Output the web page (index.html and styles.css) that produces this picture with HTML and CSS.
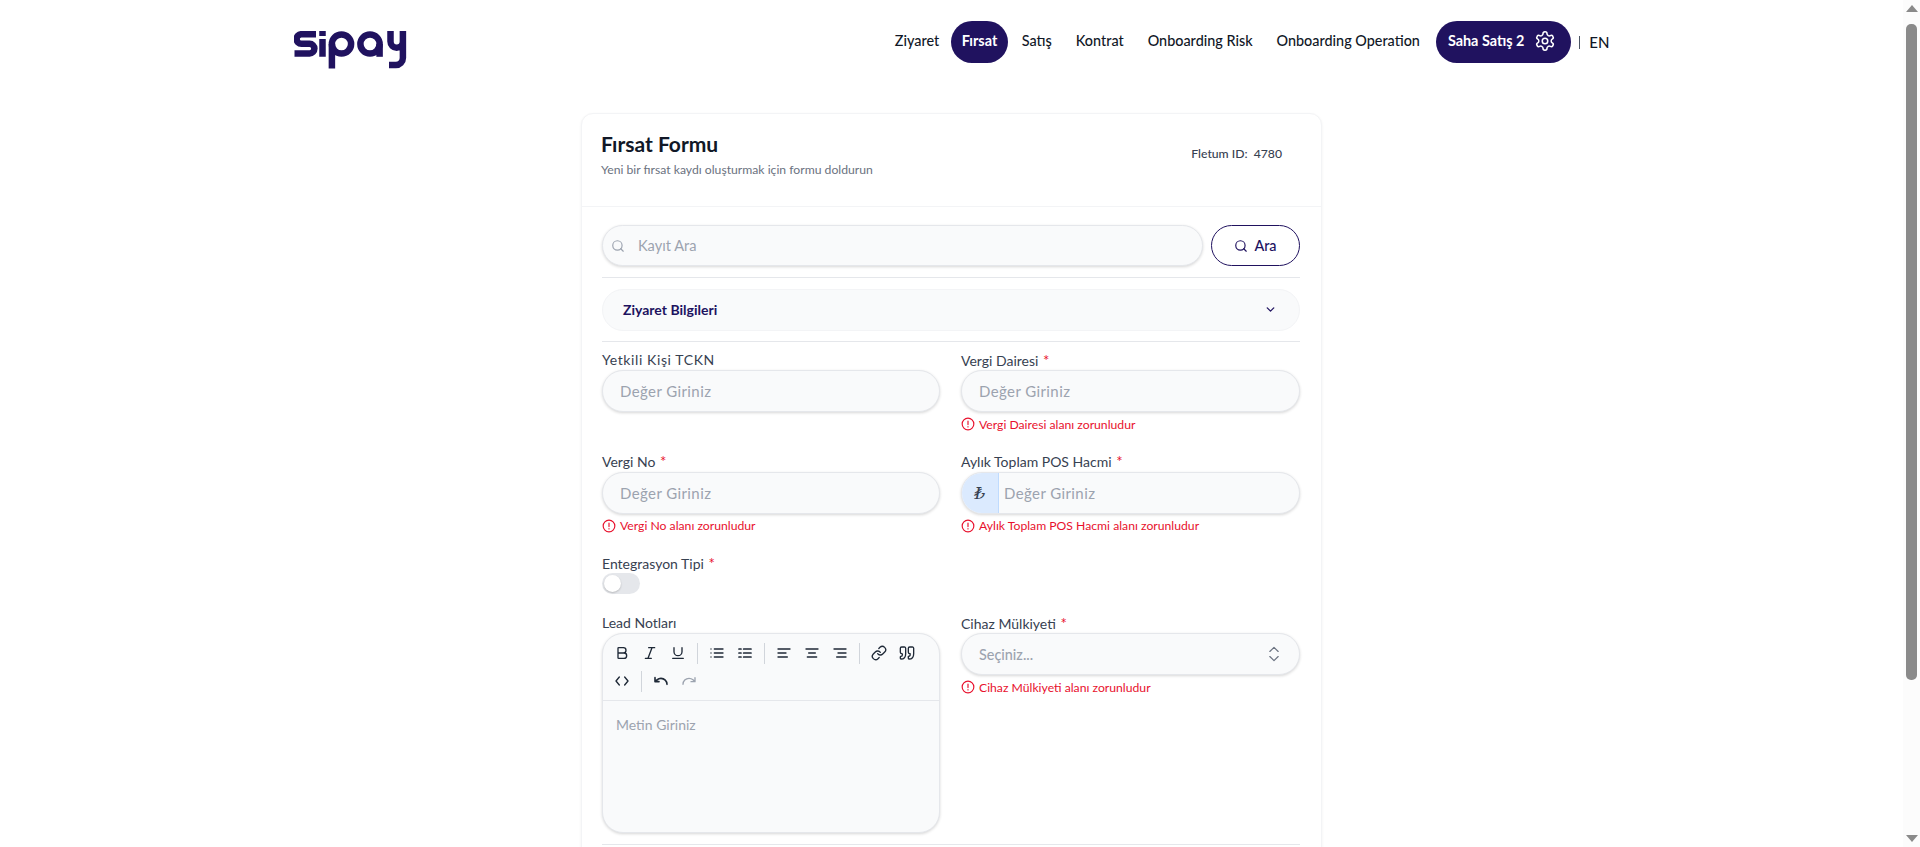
FILE: index.html
```html
<!DOCTYPE html>
<html lang="tr">

<head>
    <meta charset="UTF-8">
    <meta name="viewport" content="width=device-width, initial-scale=1.0">
    <title>Fırsat Formu</title>
    <link rel="stylesheet" href="styles.css">
</head>

<body>
    <div class="page">
        <header class="topbar">
            <svg class="logo" viewBox="0 0 113 38" fill="none" stroke="#20125f" stroke-width="6.5">
                <path d="M22 3.2H7.4a4.8 4.8 0 0 0 0 9.6H15.6a4.8 4.8 0 0 1 0 9.6H0.5" />
                <path d="M28.5 0V5M28.5 8V25.8" />
                <circle cx="47.5" cy="13" r="9.6" />
                <path d="M37.9 13V37.5" />
                <circle cx="76" cy="13" r="9.6" />
                <path d="M85.6 13V25.8" />
                <path d="M96.5 0V10.5a6.2 6.2 0 0 0 12.4 0M108.9 0V27a7 7 0 0 1 -7 7H95" />
            </svg>
            <nav class="nav">
                <a class="nav-link">Ziyaret</a>
                <a class="nav-link active">Fırsat</a>
                <a class="nav-link">Satış</a>
                <a class="nav-link">Kontrat</a>
                <a class="nav-link">Onboarding Risk</a>
                <a class="nav-link">Onboarding Operation</a>
                <a class="user-pill">Saha Satış 2
                    <svg width="22" height="22" viewBox="0 0 24 24" fill="none" stroke="#fff" stroke-width="1.7" stroke-linecap="round" stroke-linejoin="round">
                        <path d="M12.2 2h-.4a2 2 0 0 0-2 2v.2a2 2 0 0 1-1 1.7l-.4.3a2 2 0 0 1-2 0l-.2-.1a2 2 0 0 0-2.7.7l-.2.4a2 2 0 0 0 .7 2.7l.2.1a2 2 0 0 1 1 1.7v.5a2 2 0 0 1-1 1.8l-.2.1a2 2 0 0 0-.7 2.7l.2.4a2 2 0 0 0 2.7.7l.2-.1a2 2 0 0 1 2 0l.4.3a2 2 0 0 1 1 1.7v.2a2 2 0 0 0 2 2h.4a2 2 0 0 0 2-2v-.2a2 2 0 0 1 1-1.7l.4-.3a2 2 0 0 1 2 0l.2.1a2 2 0 0 0 2.7-.7l.2-.4a2 2 0 0 0-.7-2.7l-.2-.1a2 2 0 0 1-1-1.8v-.5a2 2 0 0 1 1-1.7l.2-.1a2 2 0 0 0 .7-2.7l-.2-.4a2 2 0 0 0-2.7-.7l-.2.1a2 2 0 0 1-2 0l-.4-.3a2 2 0 0 1-1-1.7V4a2 2 0 0 0-2-2z" />
                        <circle cx="12" cy="12" r="3" />
                    </svg>
                </a>
                <span class="lang-sep"></span>
                <a class="lang">EN</a>
            </nav>
        </header>

        <main class="card">
            <div class="card-head">
                <div>
                    <h1>Fırsat Formu</h1>
                    <p>Yeni bir fırsat kaydı oluşturmak için formu doldurun</p>
                </div>
                <div class="fletum">Fletum ID:&nbsp; 4780</div>
            </div>

            <div class="card-body">
                <div class="search-row">
                    <div class="search-box">
                        <svg width="14" height="14" viewBox="0 0 24 24" fill="none" stroke="#9ca3af" stroke-width="2" stroke-linecap="round">
                            <circle cx="11" cy="11" r="8" />
                            <path d="M21 21l-4.3-4.3" />
                        </svg>
                        <input type="text" placeholder="Kayıt Ara">
                    </div>
                    <button class="search-btn">
                        <svg width="14" height="14" viewBox="0 0 24 24" fill="none" stroke="#20125f" stroke-width="2" stroke-linecap="round">
                            <circle cx="11" cy="11" r="8" />
                            <path d="M21 21l-4.3-4.3" />
                        </svg>
                        Ara
                    </button>
                </div>

                <hr class="rule rule-search">

                <div class="accordion">
                    <span>Ziyaret Bilgileri</span>
                    <svg width="13" height="13" viewBox="0 0 24 24" fill="none" stroke="#20125f" stroke-width="2.4" stroke-linecap="round" stroke-linejoin="round">
                        <path d="M6 9l6 6 6-6" />
                    </svg>
                </div>

                <hr class="rule rule-accordion">

                <div class="form-grid">
                    <div class="field">
                        <label class="label-wide">Yetkili Kişi TCKN</label>
                        <input class="control" type="text" placeholder="Değer Giriniz">
                    </div>
                    <div class="field">
                        <label>Vergi Dairesi <i>*</i></label>
                        <input class="control" type="text" placeholder="Değer Giriniz">
                        <div class="error">
                            <svg width="14" height="14" viewBox="0 0 24 24" fill="none" stroke="currentColor" stroke-width="2" stroke-linecap="round"><circle cx="12" cy="12" r="10" /><path d="M12 7v6M12 16.5v.5" /></svg>
                            Vergi Dairesi alanı zorunludur
                        </div>
                    </div>
                    <div class="field field-low">
                        <label>Vergi No <i>*</i></label>
                        <input class="control" type="text" placeholder="Değer Giriniz">
                        <div class="error">
                            <svg width="14" height="14" viewBox="0 0 24 24" fill="none" stroke="currentColor" stroke-width="2" stroke-linecap="round"><circle cx="12" cy="12" r="10" /><path d="M12 7v6M12 16.5v.5" /></svg>
                            Vergi No alanı zorunludur
                        </div>
                    </div>
                    <div class="field field-low">
                        <label>Aylık Toplam POS Hacmi <i>*</i></label>
                        <div class="money">
                            <span class="money-sign">₺</span>
                            <input type="text" placeholder="Değer Giriniz">
                        </div>
                        <div class="error">
                            <svg width="14" height="14" viewBox="0 0 24 24" fill="none" stroke="currentColor" stroke-width="2" stroke-linecap="round"><circle cx="12" cy="12" r="10" /><path d="M12 7v6M12 16.5v.5" /></svg>
                            Aylık Toplam POS Hacmi alanı zorunludur
                        </div>
                    </div>
                    <div class="field field-wide">
                        <label>Entegrasyon Tipi <i>*</i></label>
                        <span class="toggle"><span class="knob"></span></span>
                    </div>
                    <div class="field">
                        <label>Lead Notları</label>
                        <div class="editor">
                            <div class="toolbar">
                                <button class="tool"><svg viewBox="0 0 24 24"><path d="M6 12h9a4 4 0 0 1 0 8H7a1 1 0 0 1-1-1V5a1 1 0 0 1 1-1h7a4 4 0 0 1 0 8" /></svg></button>
                                <button class="tool"><svg viewBox="0 0 24 24"><path d="M19 4h-9M14 20H5M15 4L9 20" /></svg></button>
                                <button class="tool"><svg viewBox="0 0 24 24"><path d="M6 4v6a6 6 0 0 0 12 0V4M4 20h16" /></svg></button>
                                <span class="tool-sep"></span>
                                <button class="tool"><svg viewBox="0 0 24 24"><path d="M3 6h.01M3 12h.01M3 18h.01M8 6h13M8 12h13M8 18h13" /></svg></button>
                                <button class="tool"><svg viewBox="0 0 24 24"><path d="M10 6h11M10 12h11M10 18h11M3 6h3M3 12h3M3 18h3" stroke-width="2.6" /></svg></button>
                                <span class="tool-sep"></span>
                                <button class="tool"><svg viewBox="0 0 24 24"><path d="M21 6H3M15 12H3M17 18H3" /></svg></button>
                                <button class="tool"><svg viewBox="0 0 24 24"><path d="M21 6H3M17 12H7M19 18H5" /></svg></button>
                                <button class="tool"><svg viewBox="0 0 24 24"><path d="M21 6H3M21 12H9M21 18H7" /></svg></button>
                                <span class="tool-sep"></span>
                                <button class="tool"><svg viewBox="0 0 24 24"><path d="M10 13a5 5 0 0 0 7.54.54l3-3a5 5 0 0 0-7.07-7.07l-1.72 1.71M14 11a5 5 0 0 0-7.54-.54l-3 3a5 5 0 0 0 7.07 7.07l1.71-1.71" /></svg></button>
                                <button class="tool"><svg viewBox="0 0 24 24"><path d="M3 21c3 0 7-1 7-8V5c0-1.25-.756-2.017-2-2H4c-1.25 0-2 .75-2 1.972V11c0 1.25.75 2 2 2 1 0 1 0 1 1v1c0 1-1 2-2 2s-1 .008-1 1.031V20c0 1 0 1 1 1z" /><path d="M15 21c3 0 7-1 7-8V5c0-1.25-.757-2.017-2-2h-4c-1.25 0-2 .75-2 1.972V11c0 1.25.75 2 2 2h.75c0 2.25.25 4-2.75 4v3c0 1 0 1 1 1z" /></svg></button>
                                <button class="tool"><svg viewBox="0 0 24 24"><path d="M16 18l5-6-5-6M8 6l-5 6 5 6" /></svg></button>
                                <span class="tool-sep"></span>
                                <button class="tool"><svg viewBox="0 0 24 24"><path d="M3 7v6h6M21 17a9 9 0 0 0-9-9 9 9 0 0 0-6 2.3L3 13" stroke-width="2.4" /></svg></button>
                                <button class="tool off"><svg viewBox="0 0 24 24"><path d="M21 7v6h-6M3 17a9 9 0 0 1 9-9 9 9 0 0 1 6 2.3l3 2.7" /></svg></button>
                            </div>
                            <div class="editor-body">Metin Giriniz</div>
                        </div>
                    </div>
                    <div class="field">
                        <label>Cihaz Mülkiyeti <i>*</i></label>
                        <div class="select">
                            <span>Seçiniz...</span>
                            <svg width="20" height="20" viewBox="0 0 24 24" fill="none" stroke="#6b7280" stroke-width="1.4" stroke-linecap="round" stroke-linejoin="round">
                                <path d="M7 15l5 5 5-5M7 9l5-5 5 5" />
                            </svg>
                        </div>
                        <div class="error">
                            <svg width="14" height="14" viewBox="0 0 24 24" fill="none" stroke="currentColor" stroke-width="2" stroke-linecap="round"><circle cx="12" cy="12" r="10" /><path d="M12 7v6M12 16.5v.5" /></svg>
                            Cihaz Mülkiyeti alanı zorunludur
                        </div>
                    </div>
                </div>

                <hr class="rule rule-form">
            </div>
        </main>
    </div>

    <div class="scrollbar">
        <span class="arrow-up"></span>
        <span class="thumb-track"><span class="thumb"></span></span>
        <span class="arrow-down"></span>
    </div>
</body>

</html>
```

FILE: styles.css
```css
* {
    box-sizing: border-box;
}

html,
body {
    height: 100%;
    margin: 0;
    overflow: hidden;
}

body {
    display: flex;
    background: #fff;
    font-family: 'Lato', 'Noto Sans', sans-serif;
    color: #111827;
}

.page {
    flex: 1;
    min-width: 0;
    overflow: hidden;
}

/* top bar */
.topbar {
    width: 1320px;
    height: 113px;
    margin: 0 auto;
    padding: 21px 2px 0 2px;
    display: flex;
    justify-content: space-between;
    align-items: flex-start;
}

.logo {
    width: 113px;
    height: 38px;
    margin-top: 10px;
}

.nav {
    display: flex;
    align-items: center;
    font-size: 14.4px;
    font-weight: 500;
}

.nav-link {
    height: 42px;
    padding: 0 12px 3px;
    border-radius: 21px;
    display: flex;
    align-items: center;
    color: #111827;
}

.nav-link.active {
    margin-right: 2px;
    padding: 0 10.5px 3px;
    background: #20125f;
    color: #fff;
    font-weight: 700;
}

.user-pill {
    height: 42px;
    margin-left: 4px;
    padding: 0 15px 3px 12px;
    border-radius: 21px;
    background: #20125f;
    color: #fff;
    font-weight: 700;
    display: flex;
    align-items: center;
    gap: 10px;
}

.lang-sep {
    width: 1px;
    height: 13px;
    margin-left: 8px;
    background: #4b5563;
}

.lang {
    margin-left: 9px;
    font-size: 15px;
}

/* card */
.card {
    width: 741px;
    margin: 0 auto;
    border: 1px solid #f3f4f6;
    border-radius: 12px;
    box-shadow: 0 1px 3px rgba(0, 0, 0, 0.06);
    background: #fff;
}

.card-head {
    height: 93px;
    padding: 16px 39px 0 19px;
    border-bottom: 1px solid #f3f4f6;
    display: flex;
    justify-content: space-between;
}

.card-head h1 {
    margin: 0;
    font-size: 21px;
    line-height: 28px;
    font-weight: 700;
}

.card-head p {
    margin: 4px 0 0;
    font-size: 12.2px;
    line-height: 16px;
    color: #6b7280;
}

.fletum {
    margin-top: 16px;
    font-size: 12.2px;
    font-weight: 500;
    color: #374151;
}

.card-body {
    padding: 18px 21px 90px 20px;
}

.search-row {
    display: flex;
    gap: 8px;
}

.search-box {
    flex: 1;
    height: 41px;
    padding: 0 8px;
    display: flex;
    align-items: center;
    gap: 13px;
    background: #f9fafb;
    border: 1px solid #e5e7eb;
    border-radius: 21px;
    box-shadow: 0 1px 3px rgba(0, 0, 0, 0.16);
}

.search-box input,
.money input {
    flex: 1;
    min-width: 0;
    padding: 0;
    border: 0;
    outline: 0;
    background: transparent;
    font: inherit;
}

.search-box input {
    font-size: 14.6px;
}

input::placeholder {
    color: #9ca3af;
    opacity: 1;
}

.search-btn {
    width: 89px;
    height: 41px;
    display: flex;
    align-items: center;
    justify-content: center;
    gap: 6px;
    background: #fff;
    border: 1px solid #20125f;
    border-radius: 21px;
    color: #20125f;
    font: inherit;
    font-size: 14.4px;
    font-weight: 500;
}

.rule {
    margin: 0;
    border: 0;
    border-top: 1px solid #e5e7eb;
}

.rule-search {
    margin: 11px 0;
}

.accordion {
    height: 42px;
    padding: 0 22px 2px 20px;
    display: flex;
    align-items: center;
    justify-content: space-between;
    background: #f9fafb;
    border: 1px solid #f3f4f6;
    border-radius: 21px;
    font-size: 14px;
    font-weight: 700;
    color: #20125f;
}

.rule-accordion {
    margin: 10px 0 9px;
}

/* form */
.form-grid {
    display: grid;
    grid-template-columns: 338px 339px;
    column-gap: 21px;
    row-gap: 20px;
}

.field label {
    display: block;
    height: 19px;
    font-size: 14px;
    line-height: 18px;
    color: #374151;
}

.field label.label-wide {
    letter-spacing: 0.6px;
}

.field label i {
    margin-left: 1px;
    font-style: normal;
    font-size: 15px;
    color: #e8112d;
}

.field-low label {
    height: 20px;
}

.field-low .error {
    height: 17px;
    margin-top: 3px;
}

.field-wide {
    grid-column: 1 / 3;
}

.control,
.select,
.money {
    display: flex;
    align-items: center;
    width: 100%;
    height: 42px;
    background: #f9fafb;
    border: 1px solid #e5e7eb;
    border-radius: 21px;
    box-shadow: 0 1px 3px rgba(0, 0, 0, 0.16);
    font: inherit;
    font-size: 14px;
    outline: 0;
}

.control,
.money input {
    font-size: 15px;
    letter-spacing: 0.4px;
}

.control {
    padding: 0 17px;
}

.money {
    overflow: hidden;
}

.money-sign {
    width: 37px;
    height: 100%;
    display: flex;
    align-items: center;
    justify-content: center;
    flex: none;
    background: #dbeafe;
    border-right: 1px solid #bfdbfe;
    color: #374151;
    font-family: 'Liberation Serif', 'DejaVu Serif', serif;
    font-style: italic;
    font-size: 17px;
}

.money input {
    padding-left: 5px;
}

.select {
    justify-content: space-between;
    padding: 0 15px 0 17px;
    color: #9ca3af;
    font-size: 14.4px;
    font-weight: 500;
}

.error {
    height: 16px;
    margin-top: 4px;
    display: flex;
    align-items: center;
    gap: 4px;
    font-size: 12.2px;
    color: #e8112d;
}

.toggle {
    display: block;
    width: 38px;
    height: 21px;
    padding: 2px;
    background: #e5e7eb;
    border-radius: 11px;
}

.knob {
    display: block;
    width: 17px;
    height: 17px;
    background: #fff;
    border-radius: 50%;
    box-shadow: 0 1px 2px rgba(0, 0, 0, 0.2);
}

/* editor */
.editor {
    height: 200px;
    background: #f9fafb;
    border: 1px solid #e5e7eb;
    border-radius: 21px;
    box-shadow: 0 1px 3px rgba(0, 0, 0, 0.16);
    overflow: hidden;
}

.toolbar {
    display: flex;
    flex-wrap: wrap;
    align-items: center;
    padding: 5px;
    border-bottom: 1px solid #e5e7eb;
}

.tool {
    width: 28px;
    height: 28px;
    padding: 0;
    background: none;
    border: 0;
    display: flex;
    align-items: center;
    justify-content: center;
}

.tool svg {
    width: 16px;
    height: 16px;
    fill: none;
    stroke: #1f2937;
    stroke-width: 2;
    stroke-linecap: round;
    stroke-linejoin: round;
}

.tool.off svg {
    stroke: #9ca3af;
}

.tool-sep {
    width: 1px;
    height: 21px;
    margin: 0 5px;
    background: #d1d5db;
}

.editor-body {
    padding: 15px 13px;
    font-size: 14px;
    line-height: 18px;
    color: #9ca3af;
}

.rule-form {
    margin-top: 11px;
}

/* scrollbar */
.scrollbar {
    flex: none;
    width: 17px;
    height: 100%;
    padding: 5px 0;
    display: flex;
    flex-direction: column;
    align-items: center;
    background: #fcfcfc;
}

.arrow-up,
.arrow-down {
    flex: none;
    width: 0;
    height: 0;
    border-left: 6px solid transparent;
    border-right: 6px solid transparent;
}

.arrow-up {
    border-bottom: 7px solid #8a8a8a;
}

.arrow-down {
    border-top: 7px solid #8a8a8a;
}

.thumb-track {
    flex: 1;
    padding-top: 12px;
}

.thumb {
    display: block;
    width: 11px;
    height: 656px;
    background: #8a8a8a;
    border-radius: 5px;
}
```
